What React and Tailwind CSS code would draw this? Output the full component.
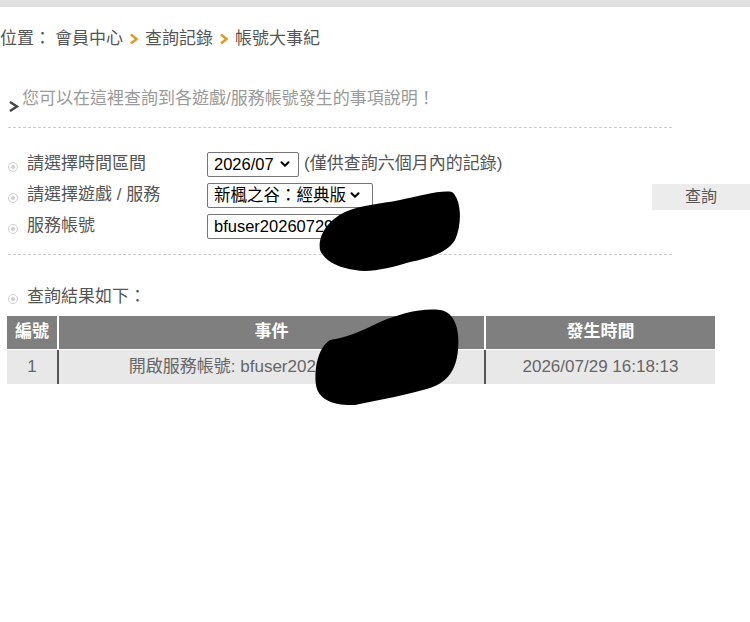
import { ChevronDown } from "lucide-react";

const font = { fontFamily: '"Liberation Sans", "Noto Sans CJK TC", sans-serif' };

function Arrow({ color = "#e19a2c" }) {
  return (
    <svg width="10" height="12" viewBox="0 0 10 12" className="mx-[6px]">
      <polyline points="2,1.5 7.5,6 2,10.5" fill="none" stroke={color} strokeWidth="2.6" />
    </svg>
  );
}

function Bullet() {
  return (
    <span className="w-[10px] h-[10px] rounded-full border border-[#cfcfcf] flex items-center justify-center mr-[9px] mt-[5px] shrink-0">
      <span className="w-[4px] h-[4px] rounded-full bg-[#cfcfcf]" />
    </span>
  );
}

function Field({ children, w }) {
  return (
    <div className={`h-[25px] border border-[#767676] rounded-[2px] bg-white flex items-center pl-[6px] pr-[3px] text-[16.5px] text-black whitespace-nowrap overflow-hidden ${w}`}>
      {children}
    </div>
  );
}

export default function App() {
  return (
    <div className="relative w-[750px] h-[622px] bg-white overflow-hidden" style={font}>
      <div className="h-[7px] bg-[#e0e0e0]" />

      {/* breadcrumb */}
      <div className="flex items-center h-[20px] mt-[22px] text-[17px] text-[#555]">
        <span>位置：</span>
        <span className="ml-[4px]">會員中心</span>
        <Arrow />
        <span>查詢記錄</span>
        <Arrow />
        <span>帳號大事紀</span>
      </div>

      {/* intro */}
      <div className="flex items-end mt-[40px] ml-[8px] text-[17px] text-[#9a9a9a] h-[22px]">
        <svg width="12" height="12" viewBox="0 0 12 12" className="mb-[-1px] mr-[2px]">
          <polyline points="2,2 9,6.5 2,11" fill="none" stroke="#444" strokeWidth="2.4" />
        </svg>
        <span>您可以在這裡查詢到各遊戲/服務帳號發生的事項說明！</span>
      </div>

      <div className="ml-[8px] w-[664px] border-t border-dashed border-[#cccccc] mt-[16px]" />

      {/* form */}
      <div className="flex mt-[23px]">
        <div className="flex flex-col gap-[5px] w-[640px]">
          <div className="flex items-center h-[26px]">
            <div className="flex items-center w-[207px] pl-[8px] text-[17px] text-[#555]">
              <Bullet />
              <span>請選擇時間區間</span>
            </div>
            <Field w="w-[92px]">
              <span>2026/07</span>
              <ChevronDown size={14} strokeWidth={3.5} className="ml-[4px] shrink-0" />
            </Field>
            <span className="ml-[5px] text-[17px] text-[#555]">(僅供查詢六個月內的記錄)</span>
          </div>
          <div className="flex items-center h-[26px]">
            <div className="flex items-center w-[207px] pl-[8px] text-[17px] text-[#555]">
              <Bullet />
              <span>請選擇遊戲 / 服務</span>
            </div>
            <Field w="w-[166px]">
              <span>新楓之谷：經典版</span>
              <ChevronDown size={14} strokeWidth={3.5} className="ml-[2px] shrink-0" />
            </Field>
          </div>
          <div className="flex items-center h-[26px]">
            <div className="flex items-center w-[207px] pl-[8px] text-[17px] text-[#555]">
              <Bullet />
              <span>服務帳號</span>
            </div>
            <Field w="w-[170px]">
              <span>bfuser20260729</span>
            </Field>
          </div>
        </div>
        <div className="flex-1 flex items-center pl-[12px]">
          <div className="w-full h-[26px] mt-[4px] bg-[#ececec] text-[#555] text-[16px] flex items-center justify-center">
            查詢
          </div>
        </div>
      </div>

      <div className="ml-[8px] w-[664px] border-t border-dashed border-[#cccccc] mt-[15px]" />

      {/* results */}
      <div className="flex items-center ml-[8px] mt-[29px] text-[17px] text-[#555]">
        <Bullet />
        <span>查詢結果如下：</span>
      </div>

      <div className="ml-[7px] w-[708px] mt-[6px] text-[17px]">
        <div className="flex h-[33px] bg-[#7f7f7f] text-white font-bold">
          <div className="w-[52px] flex items-center justify-center border-r-2 border-white">編號</div>
          <div className="w-[427px] flex items-center justify-center border-r-2 border-white">事件</div>
          <div className="flex-1 flex items-center justify-center">發生時間</div>
        </div>
        <div className="flex h-[34px] bg-[#e8e8e8] text-[#666] mt-[1px]">
          <div className="w-[52px] flex items-center justify-center border-r-2 border-[#555]">1</div>
          <div className="w-[427px] flex items-center justify-center border-r-2 border-[#555] whitespace-nowrap overflow-hidden">開啟服務帳號: bfuser20260729xxxxxx</div>
          <div className="flex-1 flex items-center justify-center">2026/07/29 16:18:13</div>
        </div>
      </div>

      {/* redaction scribbles */}
      <svg className="absolute left-0 top-0 pointer-events-none" width="750" height="622" viewBox="0 0 750 622">
        <path
          d="M345 212 C360 205 380 204 400 200 C420 196 440 190 452 192 C462 200 462 225 455 240 C448 252 430 258 410 262 C390 268 370 273 355 270 C340 268 325 262 320 250 C318 238 325 222 345 212 Z"
          fill="#000"
        />
        <path
          d="M330 340 C345 338 360 332 380 322 C400 314 420 308 440 310 C455 312 460 330 458 350 C456 370 448 382 430 388 C410 394 380 400 355 405 C335 406 318 400 316 385 C314 368 318 348 330 340 Z"
          fill="#000"
        />
      </svg>
    </div>
  );
}
